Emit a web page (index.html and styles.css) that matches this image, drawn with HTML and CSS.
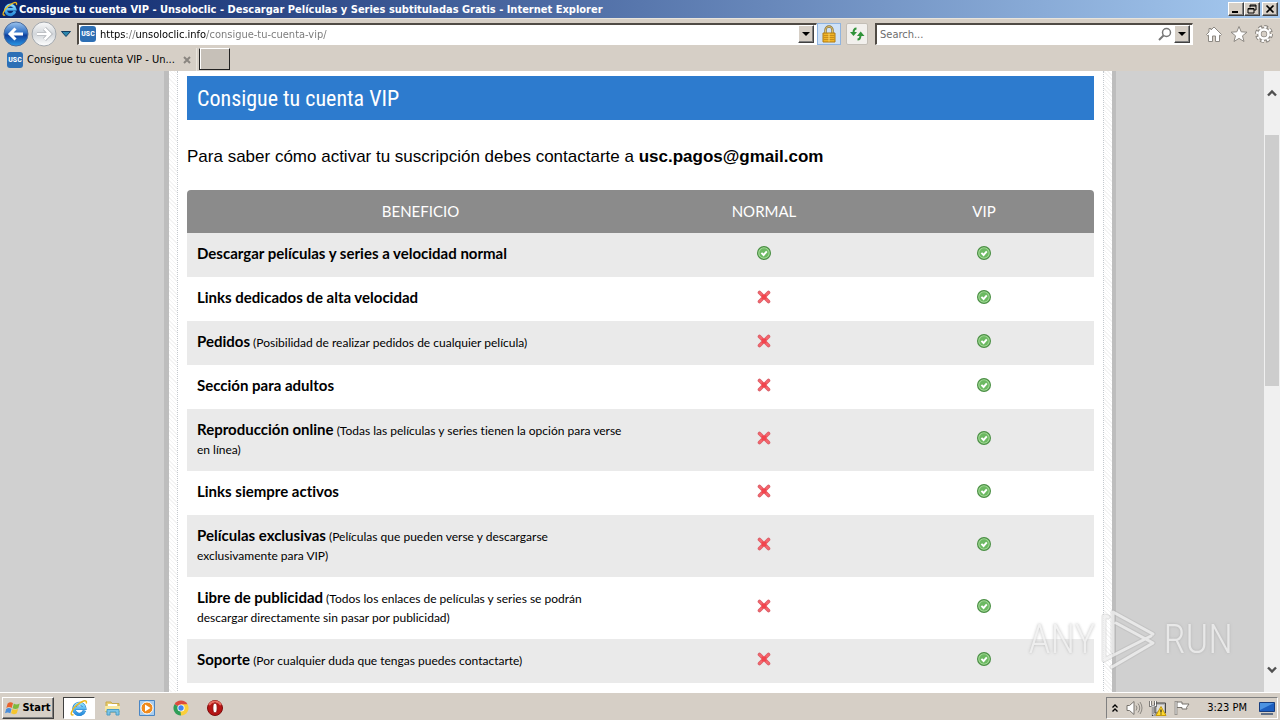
FILE: index.html
```html
<!DOCTYPE html>
<html lang="es">
<head>
    <meta charset="utf-8">
    <title>Consigue tu cuenta VIP - Unsoloclic</title>
    <link rel="stylesheet" href="styles.css">
</head>
<body>

    <!-- Iconos compartidos -->
    <svg class="symbols" aria-hidden="true">
        <linearGradient id="ie-blue" x1="0" y1="0" x2="0" y2="1">
            <stop offset="0" stop-color="#8be0ff"/>
            <stop offset="1" stop-color="#2b8fdd"/>
        </linearGradient>
        <linearGradient id="nav-blue" x1="0" y1="0" x2="0" y2="1">
            <stop offset="0" stop-color="#9cc4ee"/>
            <stop offset="0.45" stop-color="#2f6fc4"/>
            <stop offset="0.55" stop-color="#0f3f9c"/>
            <stop offset="1" stop-color="#2a9ae8"/>
        </linearGradient>
        <linearGradient id="nav-grey" x1="0" y1="0" x2="0" y2="1">
            <stop offset="0" stop-color="#fafafa"/>
            <stop offset="0.5" stop-color="#d2d6da"/>
            <stop offset="1" stop-color="#ffffff"/>
        </linearGradient>
        <symbol id="yes" viewBox="0 0 14 14">
            <circle cx="7" cy="7" r="6.400" fill="#a5dc98" stroke="#4b8f45" stroke-width="1.200"/>
            <circle cx="7" cy="7" r="4.700" fill="#6cb962"/>
            <path d="M4.400 6.800l2.200 2.200 3.200-3.600" fill="none" stroke="#fff" stroke-width="1.900"/>
        </symbol>
        <symbol id="no" viewBox="0 0 14 14">
            <path d="M2.500 2.500l9 9M11.500 2.500l-9 9" stroke="#d8606a" stroke-width="3.600" stroke-linecap="round"/>
            <path d="M2.800 2.800l8.400 8.400M11.200 2.800l-8.400 8.400" stroke="#f4666d" stroke-width="2.600" stroke-linecap="round"/>
            <path d="M5 5l4 4M9 5l-4 4" stroke="#f2434c" stroke-width="2.400"/>
        </symbol>
        <symbol id="ie" viewBox="0 0 18 18">
            <path d="M14.500 11.600A5.400 5.400 0 1 1 14.700 9.200H5" fill="none" stroke="#2f83cc" stroke-width="3.400"/>
            <path d="M14.500 11.600A5.400 5.400 0 1 1 14.700 9.200H5" fill="none" stroke="url(#ie-blue)" stroke-width="2.600"/>
            <path d="M3.500 15.600C-.5 17.500 1 11 6.500 6.300 11.500 2 17.500-.5 16.300 4.500" fill="none" stroke="#edb81d" stroke-width="1.500"/>
        </symbol>
        <symbol id="down" viewBox="0 0 8 4">
            <path d="M0 0h8L4 4z"/>
        </symbol>
    </svg>

    <header class="title-bar">
        <svg class="icon-16"><use href="#ie"/></svg>
        <span class="window-title">Consigue tu cuenta VIP - Unsoloclic - Descargar Películas y Series subtituladas Gratis - Internet Explorer</span>
        <div class="window-buttons">
            <button aria-label="Minimizar"><svg viewBox="0 0 12 10"><path d="M2 8h6" stroke="#000" stroke-width="2"/></svg></button>
            <button aria-label="Restaurar"><svg viewBox="0 0 12 10"><path d="M4 3.500V1h6v5H8M4 2h6M2 4.500h6V9H2zM2 5h6" fill="none" stroke="#000"/></svg></button>
            <button class="close" aria-label="Cerrar"><svg viewBox="0 0 12 10"><path d="M2.500 1.500l7 7M9.500 1.500l-7 7" stroke="#000" stroke-width="1.700"/></svg></button>
        </div>
    </header>

    <nav class="toolbar">
        <button class="nav-button" aria-label="Atrás">
            <svg viewBox="0 0 26 26"><circle cx="13" cy="13" r="12" fill="url(#nav-blue)" stroke="#4b6c9c"/><path d="M20 13H8M12.500 7.500L7 13l5.500 5.500" fill="none" stroke="#fff" stroke-width="3"/></svg>
        </button>
        <button class="nav-button" aria-label="Adelante">
            <svg viewBox="0 0 26 26"><circle cx="13" cy="13" r="12" fill="url(#nav-grey)" stroke="#a3a8ad"/><path d="M6 13h12M13.500 7.500L19 13l-5.500 5.500" fill="none" stroke="#a9adb2" stroke-width="4"/><path d="M6 13h12M13.500 7.500L19 13l-5.500 5.500" fill="none" stroke="#fff" stroke-width="2.600"/></svg>
        </button>
        <button class="history" aria-label="Historial">
            <svg viewBox="0 0 10 6"><path d="M.5.5h9L5 5.500z" fill="#2b86ad" stroke="#123f63"/></svg>
        </button>
        <div class="field address">
            <span class="favicon">USC</span>
            <input type="text" class="address-input" aria-label="Dirección" value="https://unsoloclic.info/consigue-tu-cuenta-vip/">
            <button class="drop" aria-label="Mostrar direcciones"><svg><use href="#down"/></svg></button>
        </div>
        <button class="tool lock" aria-label="Seguridad">
            <svg viewBox="0 0 16 18"><path d="M4.500 9V5a3.500 3.500 0 0 1 7 0v4" fill="none" stroke="#8a7440" stroke-width="2.400"/><path d="M4.500 9V5a3.500 3.500 0 0 1 7 0v4" fill="none" stroke="#e0c46c"/><path d="M2 8h12v9H2z" fill="#f0b428" stroke="#b07a10"/><path d="M2.500 10.500h11M2.500 12.500h11M2.500 14.500h11" stroke="#c98f1b"/><path d="M8 8.500v8" stroke="#f8d674"/></svg>
        </button>
        <button class="tool refresh" aria-label="Actualizar">
            <svg viewBox="0 0 16 18"><path d="M7.500 3.500C5 3.500 4.500 5 4.500 8M8.500 14.500c2.500 0 3-1.500 3-4.500" fill="none" stroke="#2f9239" stroke-width="2"/><path d="M1 7h7l-3.500 4zM8 11h7.500L11.700 6.500z" fill="#2f9239"/></svg>
        </button>
        <div class="field search">
            <input type="text" aria-label="Buscar" placeholder="Search...">
            <svg class="magnifier" viewBox="0 0 14 14"><circle cx="8.500" cy="5.500" r="4" fill="none" stroke="#777" stroke-width="1.500"/><path d="M5.500 8.500L1 13" stroke="#777" stroke-width="2"/></svg>
            <button class="drop" aria-label="Proveedores"><svg><use href="#down"/></svg></button>
        </div>
        <div class="shortcuts">
            <button aria-label="Inicio"><svg viewBox="0 0 18 18"><path d="M9 2l7.500 7.500-1.300 1.300-.7-.6V16.500H10.500V11h-3v5.500H3.500v-6.300l-.7.6-1.300-1.300L4 7V3.500h2V5z" fill="#fff" stroke="#8d8983"/></svg></button>
            <button aria-label="Favoritos"><svg viewBox="0 0 18 18"><path d="M9 1.500l2.200 5.300 5.800.4-4.500 3.600 1.500 5.700-5-3.100-5 3.100 1.500-5.700L1 7.200l5.800-.4z" fill="#fff" stroke="#8d8983"/></svg></button>
            <button aria-label="Herramientas"><svg viewBox="0 0 18 18"><circle cx="9" cy="9" r="7" fill="none" stroke="#8d8983" stroke-width="4" stroke-dasharray="3.500 2"/><circle cx="9" cy="9" r="4.700" fill="none" stroke="#8d8983" stroke-width="4.400"/><circle cx="9" cy="9" r="6.800" fill="none" stroke="#fff" stroke-width="2.400" stroke-dasharray="2.400 2.940"/><circle cx="9" cy="9" r="4.500" fill="none" stroke="#fff" stroke-width="2.600"/></svg></button>
        </div>
    </nav>

    <div class="tabs">
        <div class="tab">
            <span class="favicon">USC</span>
            <a href="#pagina">Consigue tu cuenta VIP - Un...</a>
            <button aria-label="Cerrar pestaña"><svg viewBox="0 0 8 8"><path d="M1 1l6 6M7 1L1 7" stroke="#8a8680" stroke-width="2"/></svg></button>
        </div>
        <button class="new-tab" aria-label="Nueva pestaña"></button>
    </div>

    <div class="viewport">
        <main class="page" id="pagina">
            <div class="content">
                <h1>Consigue tu cuenta VIP</h1>
                <p>Para saber cómo activar tu suscripción debes contactarte a <strong>usc.pagos@gmail.com</strong></p>
                <table>
                    <thead>
                        <tr><th class="benefit">Beneficio</th><th>Normal</th><th>VIP</th></tr>
                    </thead>
                    <tbody>
                        <tr>
                            <td><strong>Descargar películas y series a velocidad normal</strong></td>
                            <td><svg role="img" aria-label="Sí"><use href="#yes"/></svg></td>
                            <td><svg role="img" aria-label="Sí"><use href="#yes"/></svg></td>
                        </tr>
                        <tr>
                            <td><strong>Links dedicados de alta velocidad</strong></td>
                            <td><svg role="img" aria-label="No"><use href="#no"/></svg></td>
                            <td><svg role="img" aria-label="Sí"><use href="#yes"/></svg></td>
                        </tr>
                        <tr>
                            <td><strong>Pedidos</strong> (Posibilidad de realizar pedidos de cualquier película)</td>
                            <td><svg role="img" aria-label="No"><use href="#no"/></svg></td>
                            <td><svg role="img" aria-label="Sí"><use href="#yes"/></svg></td>
                        </tr>
                        <tr>
                            <td><strong>Sección para adultos</strong></td>
                            <td><svg role="img" aria-label="No"><use href="#no"/></svg></td>
                            <td><svg role="img" aria-label="Sí"><use href="#yes"/></svg></td>
                        </tr>
                        <tr>
                            <td><strong>Reproducción online</strong> (Todas las películas y series tienen la opción para verse<br>en línea)</td>
                            <td><svg role="img" aria-label="No"><use href="#no"/></svg></td>
                            <td><svg role="img" aria-label="Sí"><use href="#yes"/></svg></td>
                        </tr>
                        <tr>
                            <td><strong>Links siempre activos</strong></td>
                            <td><svg role="img" aria-label="No"><use href="#no"/></svg></td>
                            <td><svg role="img" aria-label="Sí"><use href="#yes"/></svg></td>
                        </tr>
                        <tr>
                            <td><strong>Películas exclusivas</strong> (Películas que pueden verse y descargarse<br>exclusivamente para VIP)</td>
                            <td><svg role="img" aria-label="No"><use href="#no"/></svg></td>
                            <td><svg role="img" aria-label="Sí"><use href="#yes"/></svg></td>
                        </tr>
                        <tr>
                            <td><strong>Libre de publicidad</strong> (Todos los enlaces de películas y series se podrán<br>descargar directamente sin pasar por publicidad)</td>
                            <td><svg role="img" aria-label="No"><use href="#no"/></svg></td>
                            <td><svg role="img" aria-label="Sí"><use href="#yes"/></svg></td>
                        </tr>
                        <tr>
                            <td><strong>Soporte</strong> (Por cualquier duda que tengas puedes contactarte)</td>
                            <td><svg role="img" aria-label="No"><use href="#no"/></svg></td>
                            <td><svg role="img" aria-label="Sí"><use href="#yes"/></svg></td>
                        </tr>
                    </tbody>
                </table>
            </div>
        </main>

        <div class="scrollbar">
            <button aria-label="Subir"><svg viewBox="0 0 10 8"><path d="M1 6.500l4-4 4 4" fill="none" stroke="#505050" stroke-width="2.400"/></svg></button>
            <div class="track"><div class="thumb"></div></div>
            <button aria-label="Bajar"><svg viewBox="0 0 10 8"><path d="M1 1.500l4 4 4-4" fill="none" stroke="#505050" stroke-width="2.400"/></svg></button>
        </div>

        <div class="watermark">
            <span>ANY</span>
            <svg viewBox="0 0 60 64"><path id="play" d="M8 9L4 8v44l47-24M13 44V4l40 22M16 15l37 20-41 24" fill="none" stroke="#aaa" stroke-width="5" stroke-linejoin="round" stroke-linecap="round" opacity=".4"/><path d="M8 9L4 8v44l47-24M13 44V4l40 22M16 15l37 20-41 24" fill="none" stroke="#efefef" stroke-width="3" stroke-linejoin="round" stroke-linecap="round"/></svg>
            <span>RUN</span>
        </div>
    </div>

    <footer class="taskbar">
        <button class="start">
            <svg viewBox="0 0 18 16"><path d="M3 3c2-2 4-2 6-.5L7.500 8C5.500 6.500 3.500 6.500 1.500 8z" fill="#e8622c"/><path d="M10 3c2 1.500 4 1.200 6.500 0L15 8.200c-2.500 1.300-4.500 1-6.500 0z" fill="#7dba3c"/><path d="M1.300 9c2-1.500 4-1.400 6 0L6 14c-2-1.400-4-1.400-6 0z" fill="#4a8edb"/><path d="M8.200 9.200c2 1.200 4 1.200 6.500 0L13.300 14c-2.500 1.300-4.500 1.200-6.500 0z" fill="#f5c52e"/></svg>
            Start
        </button>
        <div class="apps">
            <button class="active" aria-label="Internet Explorer"><svg viewBox="0 0 18 18"><use href="#ie"/></svg></button>
            <button aria-label="Explorador"><svg viewBox="0 0 18 18"><path d="M2 3h5l1 1.500h7V13H2z" fill="#e9cf72" stroke="#c9a94a"/><path d="M4 5h9v3H4z" fill="#fff"/><path d="M1 7h15v5H1z" fill="#f8e8a0"/><path d="M3 16v-5.500h12V16h-3v-3H6v3z" fill="#7cc5e6" stroke="#4a9cc6"/></svg></button>
            <button aria-label="Reproductor"><svg viewBox="0 0 18 18"><path d="M1.500 1.500h15v15h-15z" fill="#a8cdef" stroke="#4a86c4"/><circle cx="9" cy="9" r="6" fill="#f08a1c" stroke="#fff"/><path d="M7 5.500v7L12.500 9z" fill="#fff"/></svg></button>
            <button aria-label="Chrome"><svg viewBox="0 0 18 18"><path d="M9 9L2.500 5.250A7.500 7.500 0 0 1 15.500 5.250z" fill="#dd4b3e"/><path d="M9 9L2.500 5.250A7.500 7.500 0 0 0 9 16.500z" fill="#2f9e57"/><path d="M9 9h-1l1 7.500A7.500 7.500 0 0 0 15.500 5.250H9z" fill="#fbcf3b"/><circle cx="9" cy="9" r="3.600" fill="#fff"/><circle cx="9" cy="9" r="2.700" fill="#4385f0"/></svg></button>
            <button aria-label="Opera"><svg viewBox="0 0 18 18"><circle cx="9" cy="9" r="7.500" fill="#b81414" stroke="#7c0c0c"/><path d="M3 6a7 7 0 0 1 12 0" fill="none" stroke="#e66b62" stroke-width="2"/><ellipse cx="9" cy="9" rx="2.200" ry="5" fill="#fff" stroke="#8e1010"/></svg></button>
        </div>
        <div class="tray">
            <svg class="chevrons" viewBox="0 0 8 10"><path d="M1.500 4.500L4 2l2.500 2.500M1.500 8.500L4 6l2.500 2.500" fill="none" stroke="#000" stroke-width="1.300"/></svg>
            <svg viewBox="0 0 18 18"><path d="M2 6.500h2.500L9 2.500v13l-4.500-4H2z" fill="#fff" stroke="#77736d"/><path d="M11 6.500q2 2.500 0 5M13 4.500q3.500 4.500 0 9M15 3q4 6 0 12" fill="none" stroke="#8b8781"/></svg>
            <svg viewBox="0 0 18 18"><path d="M6 4h10.500v10H6z" fill="#b7b7b7" stroke="#444"/><path d="M8 6h7v6H8z" fill="#ddd"/><path d="M1.500 2v5h5V2M4 7v9h4" fill="none" stroke="#444" stroke-width="2.200"/><path d="M1.500 2v5h5V2M4 7v9h4" fill="none" stroke="#fff"/><path d="M12 7.500l5 9H7z" fill="#ffd92e" stroke="#c79b0b"/><path d="M12 10.500v3M12 14.500v1" stroke="#222" stroke-width="1.200"/></svg>
            <svg viewBox="0 0 18 18"><path d="M3 2v14" stroke="#77736d" stroke-width="2.600"/><path d="M4 3h5v2h7l-2.500 3.500L14 10H9V8.500H4z" fill="#fff" stroke="#77736d"/><path d="M3 2.500v13" stroke="#fff"/></svg>
            <time>3:23 PM</time>
            <svg viewBox="0 0 18 18"><path d="M1.500 3.500h15v9h-15z" fill="#1d5fc0" stroke="#173d7e"/><path d="M2 4h14L2 11z" fill="#4c93e2"/><path d="M3 15h12" stroke="#5f6f86" stroke-width="2"/></svg>
        </div>
    </footer>

</body>
</html>
```
FILE: styles.css
```css
* {
    box-sizing: border-box;
}

body {
    margin: 0;
    height: 100vh;
    display: flex;
    flex-direction: column;
    overflow: hidden;
    background: #d6cfc6;
    font-family: "DejaVu Sans Condensed", "DejaVu Sans", sans-serif;
    font-size: 11px;
    color: #000;
}

button {
    display: flex;
    align-items: center;
    justify-content: center;
    flex: none;
    margin: 0;
    padding: 0;
    border: 0;
    background: none;
    font: inherit;
    color: inherit;
}

svg {
    display: block;
    flex: none;
}

.symbols {
    position: absolute;
    width: 0;
    height: 0;
}

.icon-16 {
    width: 16px;
    height: 16px;
}

/* Barra de título */
.title-bar {
    display: flex;
    align-items: center;
    gap: 1px;
    height: 18px;
    flex: none;
    padding: 0 2px;
    background: linear-gradient(90deg, #0a246a, #a6caf0);
    color: #fff;
    font-weight: bold;
}

.window-title {
    flex: 1;
    overflow: hidden;
    white-space: nowrap;
}

.window-buttons {
    display: flex;
}

.window-buttons button {
    width: 16px;
    height: 14px;
}

.window-buttons button,
.drop,
.start {
    background: #d6cfc6;
    border: 1px solid;
    border-color: #fff #404040 #404040 #fff;
    box-shadow: inset -1px -1px #808080;
}

.window-buttons .close {
    margin-left: 2px;
}

.window-buttons svg {
    width: 12px;
    height: 10px;
}

/* Navegación */
.toolbar {
    display: flex;
    align-items: center;
    height: 30px;
    flex: none;
    padding: 0 7px 0 2px;
    border-top: 1px solid #e8e4dc;
}

.nav-button {
    width: 28px;
}

.nav-button svg {
    width: 26px;
    height: 26px;
}

.history {
    width: 16px;
    margin-right: 3px;
}

.history svg {
    width: 10px;
    height: 6px;
}

.field {
    display: flex;
    align-items: center;
    height: 22px;
    padding: 0 2px;
    background: #fff;
    border: 1px solid #fff;
    border-top: 2px solid #504b45;
    border-left: 2px solid #504b45;
}

.field input {
    flex: 1;
    min-width: 0;
    padding: 0;
    border: 0;
    outline: 0;
    background: none;
    font: inherit;
}

.address {
    flex: 1;
    gap: 4px;
    padding-left: 1px;
}

.favicon {
    flex: none;
    width: 16px;
    height: 16px;
    border-radius: 3px;
    background: #2d6fb5;
    color: #fff;
    font: bold 8px/16px "Roboto Condensed", "Liberation Sans", sans-serif;
    text-align: center;
}

/* el dominio va en negro y el resto de la dirección en gris */
.field .address-input {
    color: transparent;
    background: linear-gradient(90deg, #000 27px, #777 27px 36px, #000 36px 106px, #777 106px);
    -webkit-background-clip: text;
    background-clip: text;
}

.drop {
    width: 16px;
    height: 18px;
}

.drop svg {
    width: 8px;
    height: 4px;
}

.tool {
    height: 22px;
    width: 24px;
    border: 1px solid #8fb4e0;
    background: #cfe2f8;
}

.tool svg {
    width: 16px;
    height: 18px;
}

.refresh {
    width: 22px;
    margin: 0 7px 0 5px;
    border-color: #c3beb6;
    border-radius: 2px;
    background: #f2f0ed;
}

.search {
    width: 318px;
    padding-left: 3px;
}

.search input::placeholder {
    color: #6d6d6d;
    opacity: 1;
}

.magnifier {
    width: 14px;
    height: 14px;
    margin-right: 2px;
}

.shortcuts {
    display: flex;
    gap: 7px;
    margin-left: 12px;
}

.shortcuts svg {
    width: 18px;
    height: 18px;
}

/* Pestañas */
.tabs {
    display: flex;
    height: 23px;
    flex: none;
    gap: 2px;
}

.tab {
    display: flex;
    align-items: center;
    gap: 4px;
    width: 197px;
    padding: 0 5px 0 7px;
    border-right: 1px solid #e8e4dc;
}

.tab a {
    flex: 1;
    white-space: nowrap;
    color: inherit;
    text-decoration: none;
}

.tab svg {
    width: 8px;
    height: 8px;
}

.new-tab {
    width: 31px;
    height: 22px;
    background: #c6c0b8;
    border: 1px solid #222;
    border-top-color: #fff;
    box-shadow: inset 1px 0 #fff;
}

/* Página */
.viewport {
    position: relative;
    flex: 1;
    min-height: 0;
    overflow: hidden;
    background: #d0d0d0;
}

.page {
    max-width: 952px;
    min-height: 100%;
    margin: 0 auto;
    padding: 0 8px;
    border: solid #bdbdbd;
    border-width: 0 4px 0 5px;
    background: repeating-linear-gradient(45deg, #fff 0 2px, #f4f4f4 2px 3px);
    font-family: Lato, sans-serif;
    font-variant-ligatures: none;
}

.content {
    min-height: 622px;
    padding: 5px 9px 0;
    border: dotted #c4c9ce;
    border-width: 0 1px;
    background: #fff;
}

h1 {
    margin: 0;
    padding: 0 10px;
    background: #2d7bce;
    color: #fff;
    font: 22px/46px "Roboto Condensed", sans-serif;
    height: 44px;
}

p {
    margin: 27px 0 23px;
    font: 17px/20px "Liberation Sans", sans-serif;
}

table {
    width: 100%;
    border-collapse: separate;
    border-spacing: 0;
    table-layout: fixed;
    font-size: 12px;
    line-height: 18px;
}

th {
    height: 43px;
    padding: 0 0 2px;
    background: #8b8b8b;
    color: #fff;
    font-size: 15px;
    font-weight: normal;
    text-transform: uppercase;
}

.benefit {
    width: 467px;
    border-top-left-radius: 4px;
}

th:last-child {
    border-top-right-radius: 4px;
}

td {
    padding: 8px 10px 12px;
    vertical-align: middle;
}

td strong {
    font-size: 15px;
    line-height: 24px;
}

tbody tr:nth-child(odd) {
    background: #eaeaea;
}

td svg {
    width: 14px;
    height: 14px;
    margin: 0 auto;
}

/* Barra de desplazamiento */
.scrollbar {
    position: absolute;
    top: 0;
    right: 0;
    bottom: 0;
    display: flex;
    flex-direction: column;
    width: 16px;
    background: #f0f0f0;
}

.scrollbar button {
    height: 44px;
}

.scrollbar svg {
    width: 10px;
    height: 8px;
}

.track {
    flex: 1;
    padding: 20px 1px 0;
}

.thumb {
    height: 49%;
    background: #cdcdcd;
}

.watermark {
    position: absolute;
    right: 47px;
    bottom: 20px;
    display: flex;
    align-items: center;
    gap: 4px;
    color: #efefef;
    opacity: 0.8;
    font: 300 40px/64px "Roboto Condensed", sans-serif;
    text-shadow: 0 0 3px #aaa;
}

.watermark svg {
    width: 60px;
    height: 64px;
}

/* Barra de tareas */
.taskbar {
    display: flex;
    align-items: center;
    height: 28px;
    flex: none;
    padding: 2px 2px 0;
    border-top: 1px solid #fff;
}

.start {
    gap: 1px;
    width: 52px;
    height: 22px;
    font-weight: bold;
}

.start svg {
    width: 16px;
    height: 16px;
}

.apps {
    display: flex;
    gap: 2px;
    margin-left: 9px;
}

.apps button {
    width: 32px;
    height: 22px;
}

.apps .active {
    background: #fff;
    border: 1px solid #fff;
    border-top-color: #404040;
    border-left-color: #404040;
}

.apps svg {
    width: 18px;
    height: 18px;
}

.tray {
    display: flex;
    align-items: center;
    gap: 6px;
    height: 22px;
    margin-left: auto;
    padding: 0 1px 0 4px;
    border: 1px solid #fff;
    border-top-color: #808080;
    border-left-color: #808080;
}

.tray svg {
    width: 18px;
    height: 18px;
}

.tray .chevrons {
    width: 8px;
    height: 10px;
}

.tray time {
    margin: 0 5px 0 10px;
}
```
